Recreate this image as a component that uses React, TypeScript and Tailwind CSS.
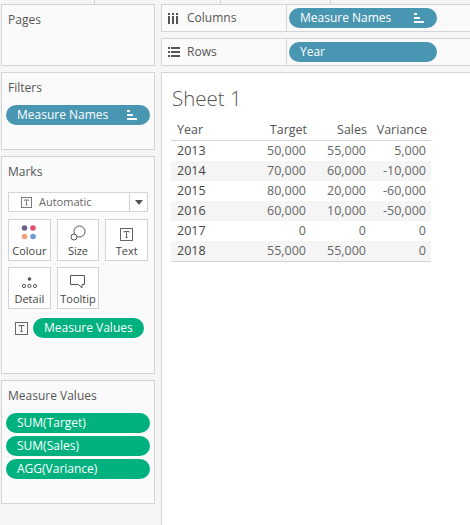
const font = "font-['Open_Sans',sans-serif]";

const rows = [
  ["2013", "50,000", "55,000", "5,000"],
  ["2014", "70,000", "60,000", "-10,000"],
  ["2015", "80,000", "20,000", "-60,000"],
  ["2016", "60,000", "10,000", "-50,000"],
  ["2017", "0", "0", "0"],
  ["2018", "55,000", "55,000", "0"],
];

function SortIcon() {
  return (
    <svg width="11" height="10" viewBox="0 0 11 10" fill="#fff">
      <rect x="0" y="0" width="3" height="2" />
      <rect x="0" y="4" width="6" height="2" />
      <rect x="0" y="8" width="10" height="2" />
    </svg>
  );
}

function Pill({ label, color, sort, className }: { label: string; color: string; sort?: boolean; className?: string }) {
  return (
    <div className={`flex h-5 items-center justify-between whitespace-nowrap rounded-full pl-[11px] pr-3 text-[12px] text-white ${color} ${className ?? ""}`}>
      <span>{label}</span>
      {sort && <SortIcon />}
    </div>
  );
}

function Panel({ title, className, children }: { title: string; className: string; children?: React.ReactNode }) {
  return (
    <div className={`border border-[#d4d4d4] bg-[#fafafa] ${className}`}>
      <div className="pl-[6px] pt-[5px] text-[12px] leading-[20px] text-[#555]">{title}</div>
      {children}
    </div>
  );
}

function TBox({ size = 13 }: { size?: number }) {
  return (
    <svg width={size} height={size} viewBox="0 0 13 13" fill="none" stroke="#666">
      <rect x="0.5" y="0.5" width="12" height="12" />
      <path d="M4 4.5V3.5H9V4.5M6.5 3.5V9.5M5.3 9.5H7.7" />
    </svg>
  );
}

function MarkCard({ label, children }: { label: string; children: React.ReactNode }) {
  return (
    <div className="flex h-[42px] flex-col items-center border border-[#d4d4d4] bg-white">
      <div className="flex h-[21px] items-end justify-center">{children}</div>
      <div className="mt-[2px] whitespace-nowrap text-[11px] leading-[16px] text-[#444]">{label}</div>
    </div>
  );
}

function Shelf({ label, icon, children }: { label: string; icon: React.ReactNode; children: React.ReactNode }) {
  return (
    <div className="flex h-[28px] border-y border-l border-[#d4d4d4] bg-[#fafafa]">
      <div className="flex w-[125px] items-center border-r border-[#d4d4d4] pl-[6px] text-[12px] text-[#555]">
        <span className="flex w-[19px] justify-start">{icon}</span>
        {label}
      </div>
      <div className="flex items-center pl-[2px]">{children}</div>
    </div>
  );
}

export default function App() {
  return (
    <div className={`flex h-[525px] w-[470px] flex-col overflow-hidden bg-[#f5f5f5] ${font}`}>
      <div className="flex h-1 shrink-0">
        <div className="w-[95px] border-r border-[#d4d4d4]" />
        <div className="w-[126px] border-r border-[#d4d4d4]" />
        <div className="w-[110px] border-r border-[#d4d4d4]" />
      </div>
      <div className="flex flex-1">
        <div className="flex w-[161px] shrink-0 flex-col gap-[6px] pl-px pr-[6px]">
          <Panel title="Pages" className="h-[62px]" />
          <Panel title="Filters" className="h-[78px]">
            <Pill label="Measure Names" color="bg-[#4996b2]" sort className="mx-[4px] mt-[7px]" />
          </Panel>
          <Panel title="Marks" className="h-[218px]">
            <div className="mx-[6px] mt-[10px] flex h-5 items-center border border-[#d4d4d4] bg-white text-[11px] text-[#666]">
              <div className="flex flex-1 items-center pl-3">
                <span className="mr-[7px] flex"><TBox size={11} /></span>
                Automatic
              </div>
              <div className="flex h-full w-[18px] items-center justify-center border-l border-[#d4d4d4]">
                <div className="h-0 w-0 border-x-[4px] border-t-[5px] border-x-transparent border-t-[#555]" />
              </div>
            </div>
            <div className="mx-[6px] mt-[7px] grid grid-cols-3 gap-x-[6px] gap-y-[6px]">
              <MarkCard label="Colour">
                <svg width="16" height="16" viewBox="0 0 16 16">
                  <circle cx="3.5" cy="3" r="2.8" fill="#6f6490" />
                  <circle cx="12" cy="3" r="2.8" fill="#e2506f" />
                  <circle cx="3.5" cy="11.5" r="2.8" fill="#f0a078" />
                  <circle cx="12" cy="11.5" r="2.8" fill="#6d9fcc" />
                </svg>
              </MarkCard>
              <MarkCard label="Size">
                <svg width="16" height="16" viewBox="0 0 16 16" fill="none" stroke="#555">
                  <circle cx="9.5" cy="6.5" r="5.5" />
                  <circle cx="4" cy="12" r="3" fill="#fff" />
                </svg>
              </MarkCard>
              <MarkCard label="Text">
                <TBox />
              </MarkCard>
              <MarkCard label="Detail">
                <svg width="15" height="12" viewBox="0 0 15 12" fill="none" stroke="#555">
                  <circle cx="7.5" cy="2" r="1.8" fill="#555" stroke="none" />
                  <circle cx="2" cy="9" r="1.6" />
                  <circle cx="7.5" cy="9" r="1.6" />
                  <circle cx="13" cy="9" r="1.6" />
                </svg>
              </MarkCard>
              <MarkCard label="Tooltip">
                <svg width="15" height="14" viewBox="0 0 15 14" fill="none" stroke="#555">
                  <path d="M0.5 0.5H14.5V9.5H12V13L8.5 9.5H0.5Z" />
                </svg>
              </MarkCard>
            </div>
            <div className="mt-[9px] flex items-center pl-[13px]">
              <TBox />
              <Pill label="Measure Values" color="bg-[#00b180]" className="ml-[5px] w-[111px]" />
            </div>
          </Panel>
          <Panel title="Measure Values" className="h-[124px]">
            <div className="mx-[4px] mt-[7px] flex flex-col gap-[3px]">
              <Pill label="SUM(Target)" color="bg-[#00b180]" />
              <Pill label="SUM(Sales)" color="bg-[#00b180]" />
              <Pill label="AGG(Variance)" color="bg-[#00b180]" />
            </div>
          </Panel>
        </div>
        <div className="flex flex-1 flex-col gap-[6px]">
          <Shelf
            label="Columns"
            icon={
              <svg width="11" height="11" viewBox="0 0 11 11" fill="#555">
                <rect x="0" y="0" width="2" height="2" />
                <rect x="0" y="3" width="2" height="8" />
                <rect x="4" y="0" width="2" height="2" />
                <rect x="4" y="3" width="2" height="8" />
                <rect x="8" y="0" width="2" height="2" />
                <rect x="8" y="3" width="2" height="8" />
              </svg>
            }
          >
            <Pill label="Measure Names" color="bg-[#4996b2]" sort className="w-[148px]" />
          </Shelf>
          <Shelf
            label="Rows"
            icon={
              <svg width="12" height="10" viewBox="0 0 12 10" fill="#555">
                <rect x="0" y="0" width="2" height="2" />
                <rect x="3" y="0" width="9" height="2" />
                <rect x="0" y="4" width="2" height="2" />
                <rect x="3" y="4" width="9" height="2" />
                <rect x="0" y="8" width="2" height="2" />
                <rect x="3" y="8" width="9" height="2" />
              </svg>
            }
          >
            <Pill label="Year" color="bg-[#4996b2]" className="w-[148px]" />
          </Shelf>
          <div className="flex-1 border-l border-t border-[#d4d4d4] bg-white pl-[9px]">
            <div className="ml-px mt-[11px] text-[20.5px] font-light leading-[28px] text-[#555]">Sheet 1</div>
            <div className="mt-[9px] w-[260px] text-[12.5px] text-[#666]">
              <div className="grid h-[20px] grid-cols-[61px_75px_60px_64px] items-center border-b border-[#d4d4d4] text-[#555]">
                <span className="pl-[6px]">Year</span>
                <span className="text-right">Target</span>
                <span className="text-right">Sales</span>
                <span className="pr-[4px] text-right">Variance</span>
              </div>
              <div className="border-b border-[#d4d4d4]">
                {rows.map((r, i) => (
                  <div
                    key={r[0]}
                    className={`grid h-[20px] grid-cols-[61px_74px_60px_65px] items-center ${i % 2 === 1 ? "bg-[#f5f5f5]" : ""}`}
                  >
                    <span className="pl-[6px] text-[#444]">{r[0]}</span>
                    <span className="text-right">{r[1]}</span>
                    <span className="text-right">{r[2]}</span>
                    <span className="pr-[5px] text-right">{r[3]}</span>
                  </div>
                ))}
              </div>
            </div>
          </div>
        </div>
      </div>
    </div>
  );
}
